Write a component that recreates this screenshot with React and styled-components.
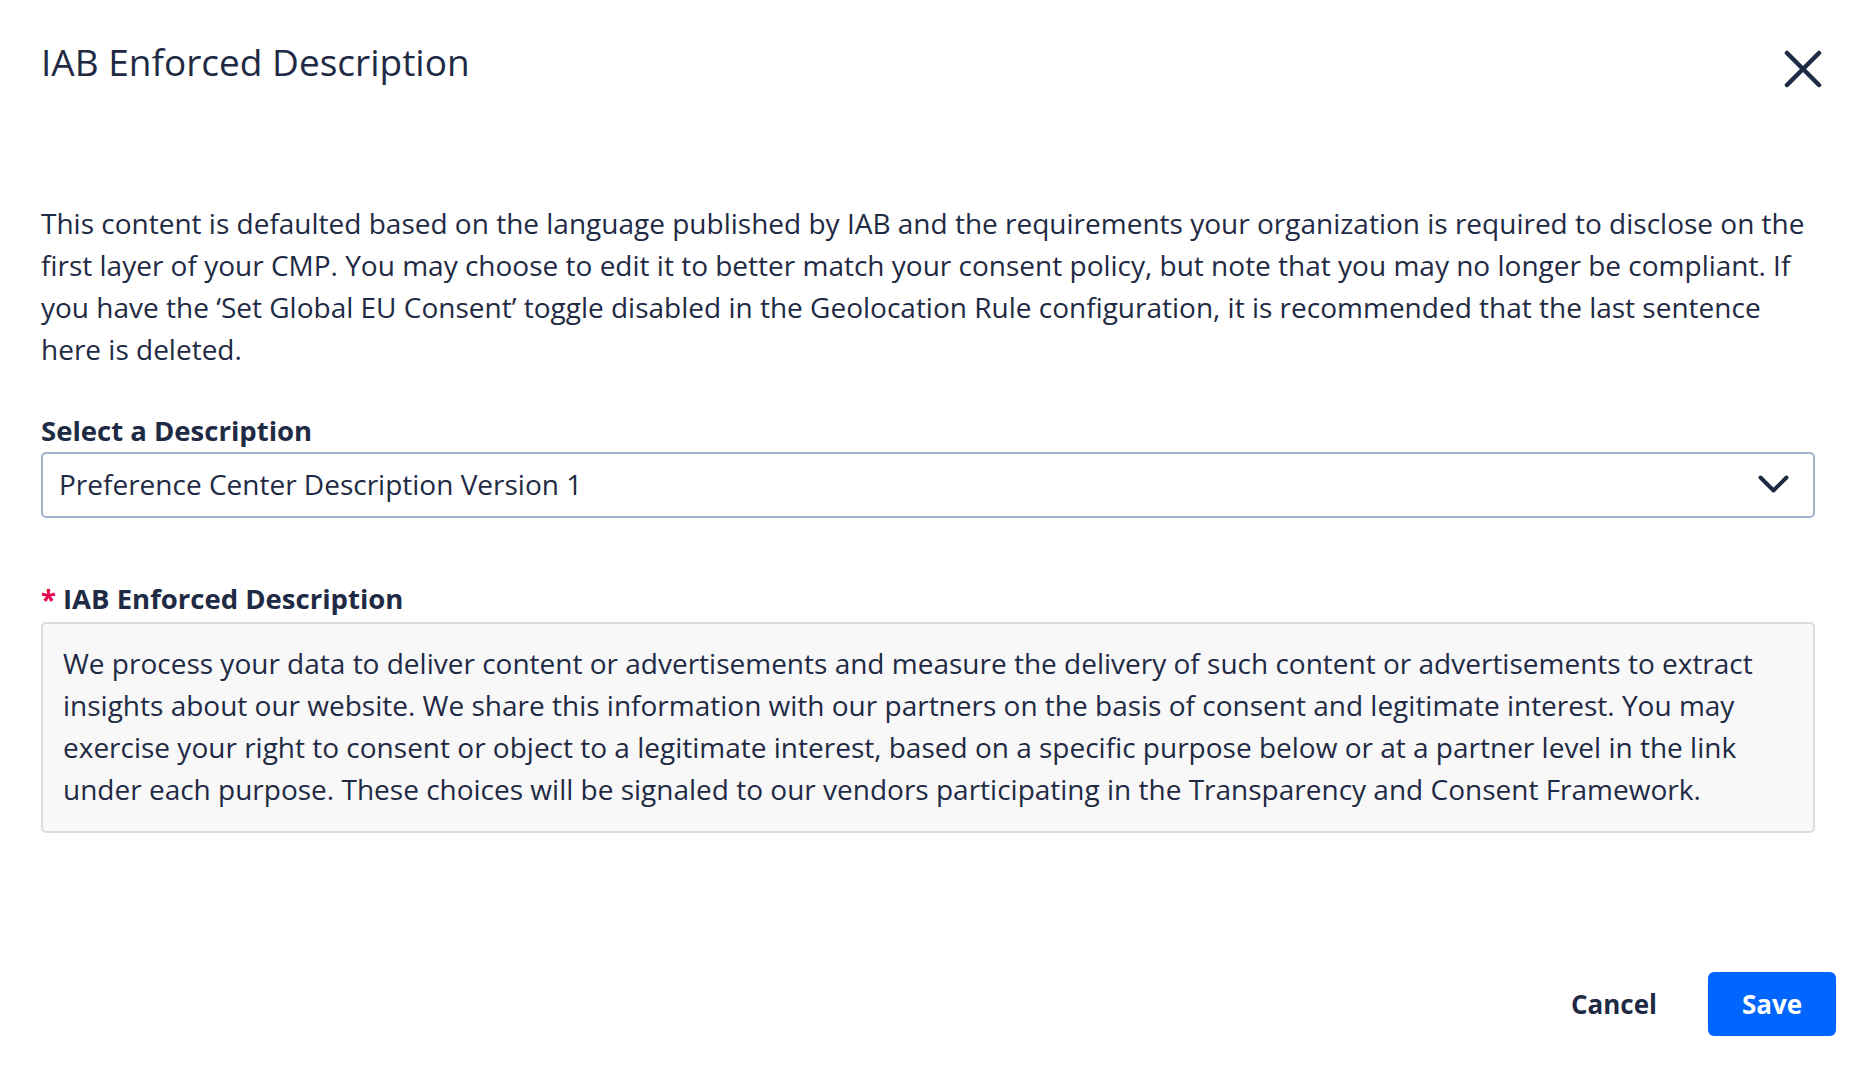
import React from "react";
import styled, { createGlobalStyle } from "styled-components";

const GlobalStyle = createGlobalStyle`
  html, body {
    margin: 0;
    padding: 0;
    background: #ffffff;
  }
  body {
    font-family: "Open Sans", "Noto Sans", sans-serif;
    color: #1f2a44;
  }
  * {
    box-sizing: border-box;
  }
`;

const Modal = styled.div`
  width: 1874px;
  min-height: 1072px;
  background: #ffffff;
  display: flex;
  flex-direction: column;
`;

const Header = styled.div`
  display: flex;
  justify-content: space-between;
  align-items: flex-start;
  padding: 36px 52px 0 41px;
`;

const Title = styled.h2`
  margin: 0;
  font-size: 37px;
  line-height: 51px;
  font-weight: 500;
  color: #1f2a44;
`;

const CloseButton = styled.button`
  border: none;
  background: none;
  padding: 0;
  margin-top: 14px;
  width: 38px;
  height: 38px;
  cursor: pointer;
  color: #1f2a44;
  display: flex;

  svg {
    width: 100%;
    height: 100%;
  }
`;

const Body = styled.div`
  padding: 0 59px 0 41px;
  margin-top: 114px;
  display: flex;
  flex-direction: column;
`;

const Intro = styled.p`
  margin: 0;
  font-size: 28px;
  line-height: 42px;
  color: #1f2a44;
`;

const Field = styled.div`
  display: flex;
  flex-direction: column;
  margin-top: ${(p) => p.$gap}px;
`;

const Label = styled.label`
  font-size: 27.5px;
  line-height: 42px;
  font-weight: 700;
  color: #1f2a44;
  margin-bottom: ${(p) => p.$space || 0}px;
`;

const Required = styled.span`
  color: #e6004c;
  margin-right: 7px;
`;

const SelectBox = styled.div`
  height: 66px;
  border: 2px solid #9fb3cb;
  border-radius: 5px;
  display: flex;
  align-items: center;
  justify-content: space-between;
  padding: 0 24px 2px 16px;
  font-size: 28px;
  color: #1f2a44;
  background: #ffffff;

  svg {
    width: 31px;
    height: 18px;
  }
`;

const TextBox = styled.div`
  border: 2px solid #dcdcdc;
  border-radius: 5px;
  background: #f8f8f9;
  padding: 18px 21px 21px 20px;
  font-size: 28px;
  line-height: 42px;
  color: #1f2a44;
`;

const Footer = styled.div`
  display: flex;
  justify-content: flex-end;
  align-items: center;
  gap: 24px;
  padding: 0 38px 0 0;
  margin-top: 139px;
`;

const TextButton = styled.button`
  border: none;
  background: none;
  font-family: inherit;
  font-size: 26px;
  font-weight: 700;
  color: #1f2a44;
  padding: 0 27px;
  height: 64px;
  cursor: pointer;
`;

const PrimaryButton = styled.button`
  border: none;
  background: #0066ff;
  color: #ffffff;
  font-family: inherit;
  font-size: 26px;
  font-weight: 700;
  width: 128px;
  height: 64px;
  border-radius: 6px;
  cursor: pointer;
`;

export default function App() {
  return (
    <>
      <GlobalStyle />
      <Modal>
        <Header>
          <Title>IAB Enforced Description</Title>
          <CloseButton aria-label="Close">
            <svg viewBox="0 0 38 38" fill="none" stroke="currentColor" strokeWidth="4.5" strokeLinecap="round">
              <line x1="3" y1="3" x2="35" y2="35" />
              <line x1="35" y1="3" x2="3" y2="35" />
            </svg>
          </CloseButton>
        </Header>
        <Body>
          <Intro>
            This content is defaulted based on the language published by IAB and the requirements your
            organization is required to disclose on the first layer of your CMP. You may choose to edit it to
            better match your consent policy, but note that you may no longer be compliant. If you have the
            ‘Set Global EU Consent’ toggle disabled in the Geolocation Rule configuration, it is recommended
            that the last sentence here is deleted.
          </Intro>
          <Field $gap={40}>
            <Label>Select a Description</Label>
            <SelectBox>
              <span>Preference Center Description Version 1</span>
              <svg viewBox="0 0 31 18" fill="none" stroke="#1f2a44" strokeWidth="4" strokeLinecap="round" strokeLinejoin="round">
                <polyline points="2.5,2.5 15.5,15.5 28.5,2.5" />
              </svg>
            </SelectBox>
          </Field>
          <Field $gap={60}>
            <Label $space={2}>
              <Required>*</Required>IAB Enforced Description
            </Label>
            <TextBox>
              We process your data to deliver content or advertisements and measure the delivery of such
              content or advertisements to extract insights about our website. We share this information with
              our partners on the basis of consent and legitimate interest. You may exercise your right to
              consent or object to a legitimate interest, based on a specific purpose below or at a partner
              level in the link under each purpose. These choices will be signaled to our vendors participating
              in the Transparency and Consent Framework.
            </TextBox>
          </Field>
        </Body>
        <Footer>
          <TextButton>Cancel</TextButton>
          <PrimaryButton>Save</PrimaryButton>
        </Footer>
      </Modal>
    </>
  );
}
